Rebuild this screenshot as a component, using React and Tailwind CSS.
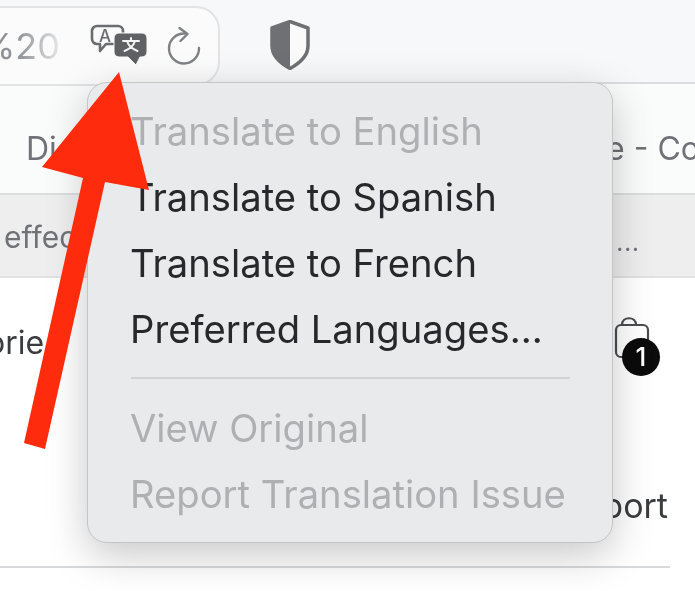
import React from "react";

function TranslateIcon() {
  return (
    <svg width="58" height="44" viewBox="0 0 58 44" fill="none" className="shrink-0">
      <path d="M7 2h21a5 5 0 0 1 5 5v8a5 5 0 0 1-5 5H16l-6 7v-7H7a5 5 0 0 1-5-5V7a5 5 0 0 1 5-5z" stroke="#6a6c70" strokeWidth="2.600" fill="#fafafa" strokeLinejoin="round" />
      <text x="9" y="18" fontFamily="Inter, sans-serif" fontSize="17" fontWeight="500" fill="#6a6c70">A</text>
      <path d="M29 9h23a5 5 0 0 1 5 5v14a5 5 0 0 1-5 5h-2l-4 8-8-8h-9a5 5 0 0 1-5-5V14a5 5 0 0 1 5-5z" fill="#5f6165" stroke="#fafafa" strokeWidth="1" />
      <path d="M33 17h16M41 14v3M45 17c-1.500 5-5.500 8-10.500 10M37 17c1.500 5 5.500 8 10.500 10" stroke="#f4f4f5" strokeWidth="2" strokeLinecap="round" />
    </svg>
  );
}

function Refresh() {
  return (
    <svg width="36" height="38" viewBox="0 0 36 38" fill="none" className="shrink-0">
      <path d="M19 6.500A15 15 0 1 0 33 21" stroke="#7f8184" strokeWidth="2.400" strokeLinecap="round" />
      <path d="M13.500 1l8 6-7 7" stroke="#7f8184" strokeWidth="2.400" strokeLinecap="round" strokeLinejoin="round" />
    </svg>
  );
}

function Shield() {
  return (
    <svg width="42" height="50" viewBox="0 0 42 50" fill="none" className="shrink-0">
      <path d="M21 1.500L39 8v18c0 10-8 17-18 22.500C11 43 3 36 3 26V8z" stroke="#6e7074" strokeWidth="3.500" fill="#fafafa" strokeLinejoin="round" />
      <path d="M21 1.500L3 8v18c0 10 8 17 18 22.500z" fill="#6e7074" />
    </svg>
  );
}

function Item({ children, disabled }) {
  return (
    <div className={"h-[66px] flex items-center pl-[42px] whitespace-nowrap " + (disabled ? "text-[#aeb0b3]" : "text-[#26282b]")}>
      {children}
    </div>
  );
}

export default function App() {
  return (
    <div className="relative w-[695px] h-[591px] overflow-hidden bg-white blur-[0.6px] font-['Inter','Liberation_Sans',sans-serif]">
      <div className="h-[82px] bg-[#f7f8f9] flex items-start">
        <div className="mt-[6px] ml-[-30px] w-[250px] h-[80px] shrink-0 rounded-[24px] border-2 border-[#e2e3e5] bg-[#fbfbfc] flex items-center pl-[8px]">
          <span className="text-[36px] w-[80px] mr-[30px] leading-none shrink-0 bg-gradient-to-r from-[#85888c] via-[#93969a] to-[#e6e7e8] bg-clip-text text-transparent">%20</span>
          <TranslateIcon />
          <div className="ml-[18px]"><Refresh /></div>
        </div>
        <div className="ml-[49px] mt-[20px]"><Shield /></div>
      </div>
      <div className="h-[113px] bg-[#fafbfb] border-t-2 border-b-2 border-[#dcddde] flex items-center justify-between pl-[26px] text-[32px] text-[#6f7276] whitespace-nowrap pt-[20px]">
        <span>Di</span>
        <span className="mr-[-5px]">e - Co</span>
      </div>
      <div className="h-[83px] bg-[#eeeeef] border-b-2 border-[#e1e2e3] flex items-center justify-between pl-[4px] pr-[55px] text-[30px] text-[#6f7276]">
        <span className="pt-[3px]">effec</span>
        <span className="tracking-[1px] text-[24px] pt-[14px]">...</span>
      </div>
      <div className="h-[127px] bg-white flex items-center justify-between pr-[41px] text-[32px] text-[#3a3c3f]">
        <span className="ml-[-14px] pt-[2px]">orie</span>
        <div className="relative w-[40px] h-[46px] mb-[6px]">
          <svg width="40" height="46" viewBox="0 0 40 46" fill="none">
            <rect x="2" y="9" width="32" height="32" rx="5" stroke="#4a4c4f" strokeWidth="2.200" />
            <path d="M8 9c0-9 14-9 14 0" stroke="#4a4c4f" strokeWidth="2.200" />
          </svg>
          <div className="absolute left-[8px] top-[22px] w-[38px] h-[38px] rounded-full bg-[#0b0b0c] flex items-center justify-center text-white text-[26px] font-medium leading-none">1</div>
        </div>
      </div>
      <div className="h-[163px] bg-white flex flex-col">
        <div className="h-[161px] flex items-end justify-end pr-[27px] pb-[35px] text-[34px] text-[#3a3c3f]">Support</div>
        <div className="w-[670px] h-[2px] bg-[#d8d9da]" />
      </div>

      {/* translation menu, floating over the page */}
      <div className="absolute left-[87px] top-[82px] w-[526px] h-[461px] rounded-[20px] bg-[#e9eaec] border border-[#c4c5c7] shadow-[0_12px_40px_rgba(0,0,0,0.22)] pt-[16px] text-[38.200px]">
        <Item disabled>Translate to English</Item>
        <Item>Translate to Spanish</Item>
        <Item>Translate to French</Item>
        <Item>Preferred Languages...</Item>
        <div className="ml-[43px] mr-[42px] h-[2px] bg-[#d2d3d5] mt-[14px] mb-[17px]" />
        <Item disabled>View Original</Item>
        <Item disabled>Report Translation Issue</Item>
      </div>

      {/* red annotation arrow */}
      <svg className="absolute left-0 top-0" width="695" height="591" viewBox="0 0 695 591">
        <polygon points="119,72 149,190 105,182 45,449 24,443 83,178 42,167" fill="#fe2c0c" />
      </svg>
    </div>
  );
}
